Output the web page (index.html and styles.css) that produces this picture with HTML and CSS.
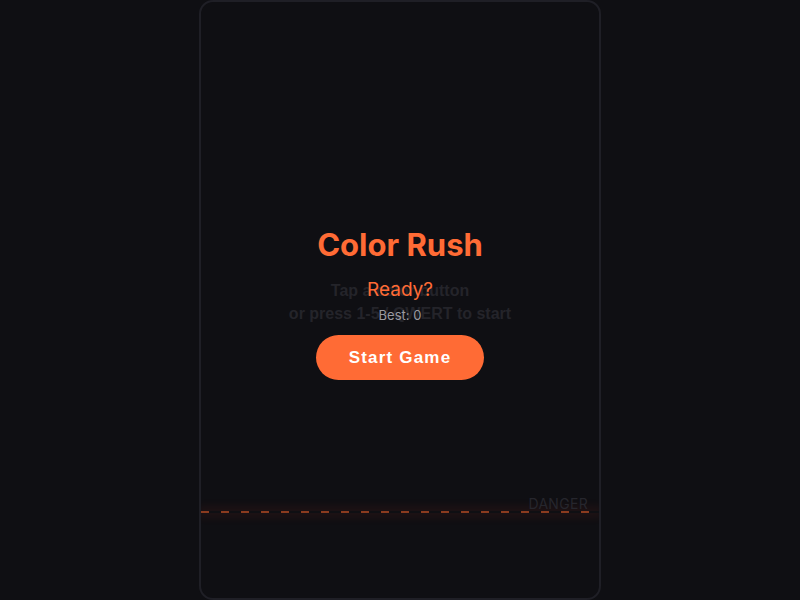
FILE: index.html
```html
<!DOCTYPE html>
<html lang="en">
<head>
    <meta charset="UTF-8">
    <meta name="viewport" content="width=device-width, initial-scale=1.0">
    <title>Color Rush</title>
    <link rel="stylesheet" href="styles.css">
</head>
<body>
    <div class="board">
        <div class="hint">
            <p>Tap a color button</p>
            <p>or press 1-5 / QWERT to start</p>
        </div>

        <div class="danger-line"></div>
        <div class="danger-label">DANGER</div>

        <div class="overlay">
            <h1 class="title">Color Rush</h1>
            <p class="status">Ready?</p>
            <p class="best">Best: 0</p>
            <button class="start-btn">Start Game</button>
        </div>
    </div>
</body>
</html>
```

FILE: styles.css
```css
body {
    margin: 0;
    padding: 0;
    background-color: #0f0f13;
    font-family: Inter, "Liberation Sans", Arial, sans-serif;
}

/* Game board */
.board {
    position: relative;
    box-sizing: border-box;
    width: 402px;
    height: 600px;
    margin: 0 auto;
    border: 2px solid #1f1f26;
    border-radius: 14px;
    display: flex;
    align-items: center;
    justify-content: center;
    overflow: hidden;
}

.hint {
    text-align: center;
    color: #24242a;
    font-family: "Liberation Sans", Arial, sans-serif;
    font-weight: bold;
    font-size: 16px;
    line-height: 23px;
    padding-top: 3px;
}

.hint p {
    margin: 0;
}

.danger-line {
    position: absolute;
    left: 0;
    right: 0;
    top: 509px;
    height: 2px;
    background: repeating-linear-gradient(90deg, #8b3b1f 0 8px, transparent 8px 20px);
    box-shadow: 0 0 10px 4px rgba(255, 70, 40, 0.08);
}

.danger-label {
    position: absolute;
    right: 11px;
    top: 493px;
    font-size: 14px;
    color: #26262d;
    letter-spacing: 0.3px;
}

/* Start overlay */
.overlay {
    position: absolute;
    inset: 0;
    display: flex;
    flex-direction: column;
    align-items: center;
    justify-content: center;
    padding-top: 7px;
}

.title {
    margin: 0;
    font-size: 31px;
    line-height: 36px;
    font-weight: 700;
    color: #ff6b35;
}

.status {
    margin: 15px 0 0;
    font-size: 19px;
    line-height: 24px;
    color: #ff6b35;
}

.best {
    margin: 5px 0 0;
    font-size: 13px;
    line-height: 16px;
    color: #9a9aa0;
}

.start-btn {
    margin-top: 12px;
    width: 168px;
    height: 45px;
    border: none;
    border-radius: 23px;
    background-color: #ff6b35;
    color: white;
    font-family: "Liberation Sans", Arial, sans-serif;
    font-weight: bold;
    font-size: 17px;
    letter-spacing: 1.2px;
    cursor: pointer;
}
```
